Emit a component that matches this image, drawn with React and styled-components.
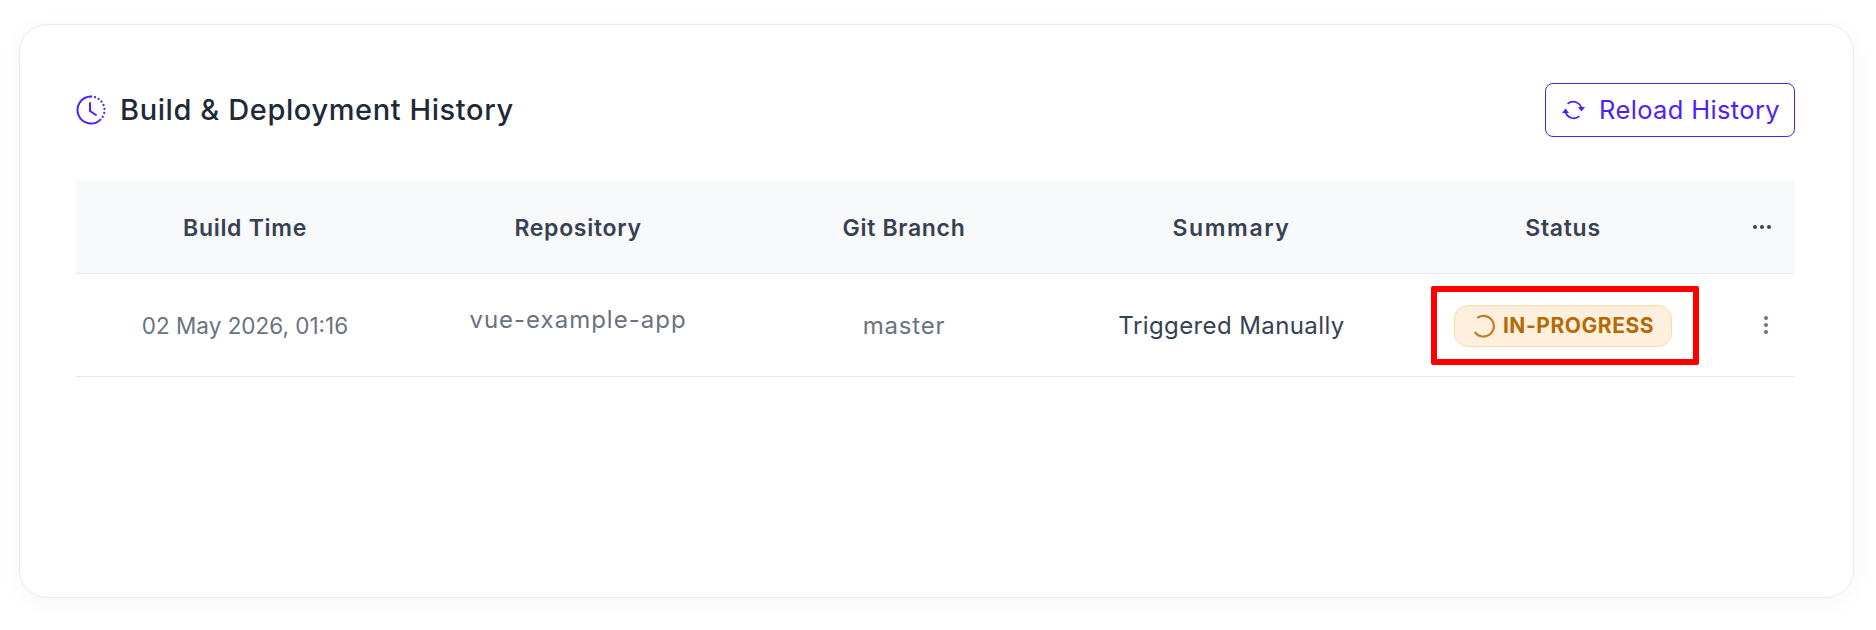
import React from 'react'
import styled, { createGlobalStyle } from 'styled-components'

const GlobalStyle = createGlobalStyle`
  html, body {
    margin: 0;
    background: #fff;
    font-family: Inter, "Noto Sans", sans-serif;
  }
  * {
    box-sizing: border-box;
  }
`

const COLUMNS = '338px 328px 324px 331px 332px 1fr'

const Page = styled.div`
  width: 1876px;
  height: 630px;
  padding: 24px 22px 32px 19px;
  overflow: hidden;
`

const Card = styled.section`
  height: 100%;
  padding: 58px 58px 0 56px;
  background: #fff;
  border: 1px solid #e8eaed;
  border-radius: 28px;
  box-shadow: 0 4px 24px rgba(17, 24, 39, 0.04);
`

const CardHeader = styled.header`
  display: flex;
  align-items: center;
  justify-content: space-between;
  height: 54px;
  margin-bottom: 43px;
`

const Title = styled.h2`
  display: flex;
  align-items: center;
  gap: 14px;
  margin: -1px 0 0;
  font-size: 29px;
  font-weight: 500;
  letter-spacing: 0.6px;
  color: #1f2937;
`

const ReloadButton = styled.button`
  display: flex;
  align-items: center;
  justify-content: center;
  gap: 14px;
  width: 250px;
  height: 54px;
  padding: 0 0 1px 2px;
  font-family: inherit;
  font-size: 25.5px;
  font-weight: 400;
  letter-spacing: 0.35px;
  color: #4f1ff5;
  background: #fff;
  border: 1px solid #4f1ff5;
  border-radius: 8px;
`

const Row = styled.div`
  display: grid;
  grid-template-columns: ${COLUMNS};
  align-items: center;
  justify-items: center;
  height: ${(p) => p.$height}px;
  background: ${(p) => p.$bg || 'transparent'};
  border-bottom: 1px solid #e5e7eb;
`

const HeadCell = styled.div`
  margin-top: 2px;
  font-size: 23px;
  font-weight: 600;
  letter-spacing: ${(p) => p.$tracking || 0.7}px;
  color: #374151;
`

const Cell = styled.div`
  margin-top: ${(p) => p.$top}px;
  font-size: ${(p) => p.$size || 24}px;
  font-weight: 400;
  letter-spacing: ${(p) => p.$tracking}px;
  color: ${(p) => p.$color || '#6b7280'};
`

const Badge = styled.span`
  position: relative;
  display: flex;
  align-items: center;
  justify-content: center;
  gap: 7px;
  width: 218px;
  height: 42px;
  margin-top: 1px;
  font-size: 21px;
  font-weight: 700;
  letter-spacing: 0.55px;
  color: #b46a06;
  background: #fff0de;
  border: 1px solid #fdd9a5;
  border-radius: 14px;
`

const Highlight = styled.span`
  position: absolute;
  top: -20px;
  right: -28px;
  bottom: -19px;
  left: -24px;
  border: 6px solid #ff0000;
  border-radius: 2px;
  pointer-events: none;
`

const RowMenu = styled.div`
  display: flex;
  margin-left: 8px;
`

const HistoryIcon = () => (
  <svg width="30" height="30" viewBox="0 0 30 30" fill="none" stroke="#4f1ff5" strokeWidth="2" strokeLinecap="round">
    <path d="M15 1.5A13.5 13.5 0 1 0 24.5 24.6" />
    <path d="M15 1.5A13.5 13.5 0 0 1 24.5 24.6" strokeDasharray="0.1 3.9" strokeWidth="2.2" />
    <path d="M14 8v8l6 4" />
  </svg>
)

const ReloadIcon = () => (
  <svg width="23" height="20" viewBox="0 0 23 20" fill="none" stroke="currentColor" strokeWidth="1.7">
    <path d="M19.6 9A8.5 8.5 0 0 0 5.6 3.9" />
    <path d="M3.4 11A8.5 8.5 0 0 0 17.4 16.1" />
    <path d="M16 7h7l-3.5 4.4z" fill="currentColor" stroke="none" />
    <path d="M0 13h7L3.5 8.6z" fill="currentColor" stroke="none" />
  </svg>
)

const SpinnerIcon = () => (
  <svg width="24" height="24" viewBox="0 0 22 22" fill="none" stroke="#b46a06" strokeWidth="2" strokeLinecap="round" opacity="0.85">
    <path d="M5.5 3.2A9.5 9.5 0 1 1 3 17" />
  </svg>
)

const DotsIcon = ({ vertical, color }) => (
  <svg width="20" height="20" viewBox="0 0 20 20" fill={color}>
    {[3, 10, 17].map((at) => (
      <circle key={at} cx={vertical ? 10 : at} cy={vertical ? at : 10} r="2" />
    ))}
  </svg>
)

export default function App() {
  return (
    <Page>
      <GlobalStyle />
      <Card>
        <CardHeader>
          <Title>
            <HistoryIcon />
            Build &amp; Deployment History
          </Title>
          <ReloadButton>
            <ReloadIcon />
            Reload History
          </ReloadButton>
        </CardHeader>
        <Row $height={94} $bg="#f8f9fb">
          <HeadCell>Build Time</HeadCell>
          <HeadCell>Repository</HeadCell>
          <HeadCell>Git Branch</HeadCell>
          <HeadCell $tracking={1.6}>Summary</HeadCell>
          <HeadCell>Status</HeadCell>
          <DotsIcon color="#374151" />
        </Row>
        <Row $height={103}>
          <Cell $top={1} $size={22.5} $tracking={0}>02 May 2026, 01:16</Cell>
          <Cell $top={-11} $tracking={1}>vue-example-app</Cell>
          <Cell $top={1} $tracking={0.8}>master</Cell>
          <Cell $top={1} $tracking={0.4} $color="#374151">Triggered Manually</Cell>
          <Badge>
            <SpinnerIcon />
            IN-PROGRESS
            <Highlight />
          </Badge>
          <RowMenu>
            <DotsIcon vertical color="#6b7280" />
          </RowMenu>
        </Row>
      </Card>
    </Page>
  )
}
